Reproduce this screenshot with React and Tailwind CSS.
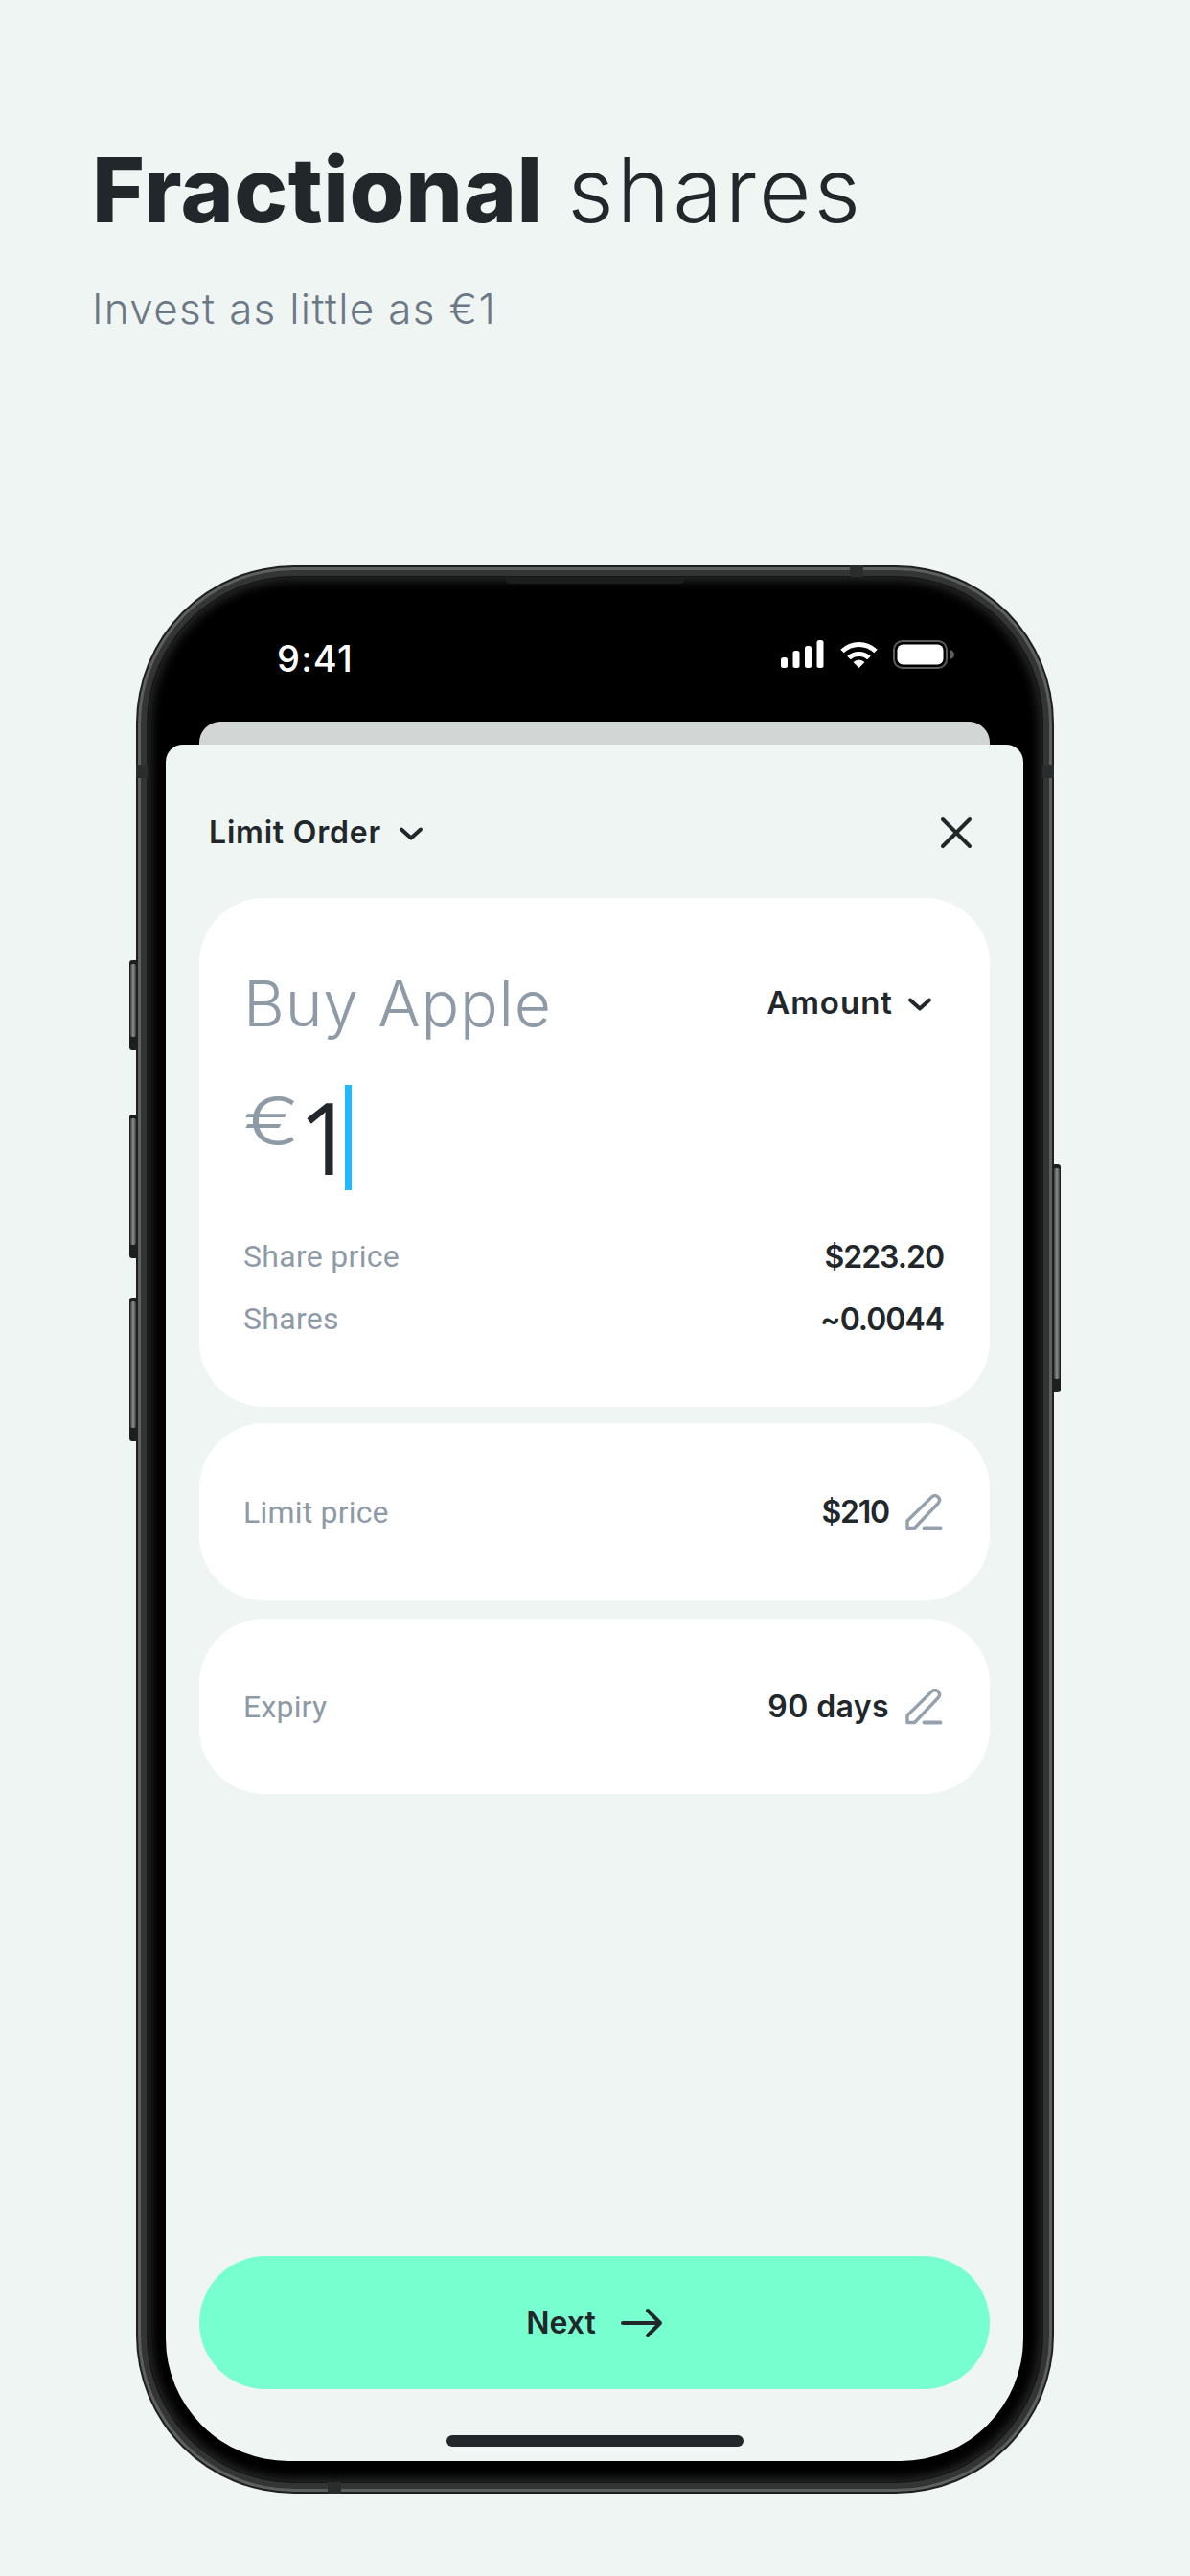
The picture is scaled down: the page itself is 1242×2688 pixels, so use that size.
import React from 'react';

const ink = 'text-[#21272a]';

function Chevron({ className }) {
  return (
    <svg viewBox="0 0 26 16" className={className} fill="none" stroke="#21272a" strokeWidth="4" strokeLinecap="round" strokeLinejoin="round">
      <path d="M3 3.5 L13 12.5 L23 3.5" />
    </svg>
  );
}

function Pencil() {
  return (
    <svg viewBox="0 0 39 38" className="h-[38px] w-[39px]" fill="none" stroke="#95a1ad" strokeLinecap="round" strokeLinejoin="round">
      <path strokeWidth="3.4" d="M2 35.5 V28 L27.5 3 C29.5 1.2 32 1.2 34 3 C36 5 36 7.5 34.2 9.5 L9.5 35.5 Z" />
      <path strokeWidth="3.8" d="M19.5 35.5 H36.5" />
    </svg>
  );
}

function StatusIcons() {
  return (
    <div className="flex items-start">
      <svg viewBox="0 0 45 29" className="h-[29px] w-[45px]" fill="#fff">
        <rect x="0" y="18" width="7" height="11" rx="2.5" />
        <rect x="12.5" y="11" width="7" height="18" rx="2.5" />
        <rect x="25" y="6" width="7" height="23" rx="2.5" />
        <rect x="37.5" y="0" width="7" height="29" rx="2.5" />
      </svg>
      <svg viewBox="0 0 39 29" className="ml-[17px] h-[29px] w-[39px]" fill="none" stroke="#fff" strokeWidth="5">
        <path d="M2 11.5 C12 2, 27 2, 37 11.5" />
        <path d="M9 18.5 C14.5 13, 24.5 13, 30 18.5" />
        <path d="M13.5 23 Q19.5 18 25.5 23 L19.5 29 Z" fill="#fff" stroke="none" />
      </svg>
      <svg viewBox="0 0 64 30" className="ml-[16px] h-[30px] w-[64px]">
        <rect x="1" y="1" width="55" height="28" rx="9" fill="none" stroke="#5c5c5c" strokeWidth="2" />
        <rect x="4.5" y="4.5" width="48" height="21" rx="6" fill="#fff" />
        <path d="M60 10 C63 11 64 13 64 15 C64 17 63 19 60 20 Z" fill="#5c5c5c" />
      </svg>
    </div>
  );
}

function InfoRow({ label, value }) {
  return (
    <div className="flex h-[40px] items-center justify-between">
      <span className="font-['Roboto'] text-[32px] tracking-[0.3px] text-[#8f9aa7]">{label}</span>
      <span className={`mt-[2px] text-[32px] font-semibold tracking-[-1px] ${ink}`}>{value}</span>
    </div>
  );
}

function EditCard({ label, value, className, valueClass }) {
  return (
    <div className={`flex items-center justify-between rounded-[68px] bg-white pl-[46px] pr-[49px] ${className}`}>
      <span className="font-['Roboto'] text-[32px] tracking-[0.2px] text-[#8f9aa7]">{label}</span>
      <div className="flex items-center gap-[17px]">
        <span className={`text-[32px] font-semibold ${valueClass} ${ink}`}>{value}</span>
        <Pencil />
      </div>
    </div>
  );
}

function SideButton({ className }) {
  return (
    <div className={`absolute w-[8px] bg-[#1d1e1e] ${className}`}>
      <div className="mx-[1px] mt-[4px] mb-[14px] h-[calc(100%-18px)] rounded-[2px] bg-gradient-to-r from-[#3c3d3d] via-[#8f908e] to-[#3c3d3d]" />
    </div>
  );
}

export default function App() {
  return (
    <div className="flex h-[2688px] w-[1242px] flex-col overflow-hidden bg-[#eff5f3] font-['Inter',sans-serif]">
      {/* Heading */}
      <div className="h-[590px] pl-[96px] pt-[146px]">
        <h1 className="text-[94px] leading-[104px] font-light tracking-[3px] text-[#21272a]">
          <span className="mr-[-4px] font-extrabold tracking-[0.6px]">Fractional</span> shares
        </h1>
        <p className="mt-[46px] text-[44px] leading-[52px] font-light tracking-[1.3px] text-[#6c7885]">Invest as little as €1</p>
      </div>

      {/* Phone */}
      <div className="relative ml-[142px] h-[2012px] w-[958px]">
        <SideButton className="left-[-7px] top-[412px] h-[94px] rounded-l-[3px]" />
        <SideButton className="left-[-7px] top-[573px] h-[150px] rounded-l-[3px]" />
        <SideButton className="left-[-7px] top-[764px] h-[150px] rounded-l-[3px]" />
        <SideButton className="right-[-7px] top-[625px] h-[238px] rounded-r-[3px]" />

        <div className="h-full rounded-[165px] bg-[#1e1f1f] p-[2px]">
          <div className="h-full rounded-[163px] bg-[#5e5f5f] p-[3px]">
            <div className="h-full rounded-[160px] bg-[#333434] p-[6px]">
              <div className="h-full rounded-[154px] bg-[#141515] p-[1px]">
                <div className="flex h-full flex-col rounded-[153px] bg-black pb-[22px] pl-[19px] pr-[20px] shadow-[inset_0_0_12px_3px_#2c2d2d]">
                  {/* Status bar */}
                  <div className="flex h-[151px] items-start justify-between pl-[116px] pr-[72px] pt-[66px]">
                    <span className="text-[38px] leading-[38px] font-medium tracking-[1.2px] text-white">9:41</span>
                    <StatusIcons />
                  </div>

                  <div className="mx-[35px] h-[24px] rounded-t-[22px] bg-[#d2d6d5]" />

                  {/* Sheet */}
                  <div className="flex flex-1 flex-col rounded-t-[18px] rounded-b-[128px] bg-[#eff5f3] px-[35px] pb-[15px]">
                    <div className="flex h-[160px] items-center justify-between pl-[10px] pr-[18px] pt-[23px]">
                      <div className="flex items-center gap-[18px]">
                        <span className={`text-[32px] font-semibold tracking-[0.8px] ${ink}`}>Limit Order</span>
                        <Chevron className="mt-[2px] h-[16px] w-[26px]" />
                      </div>
                      <svg viewBox="0 0 34 34" className="h-[34px] w-[34px]" fill="none" stroke="#21272a" strokeWidth="4" strokeLinecap="round">
                        <path d="M3 3 L31 31 M31 3 L3 31" />
                      </svg>
                    </div>

                    {/* Order card */}
                    <div className="h-[531px] rounded-[68px] bg-white pl-[46px] pr-[48px] pt-[62px]">
                      <div className="flex h-[96px] items-center justify-between">
                        <span className="text-[66px] font-light tracking-[0.8px] text-[#8f9aa7]">Buy Apple</span>
                        <div className="mr-[12px] flex items-center gap-[15px]">
                          <span className={`text-[33px] font-semibold tracking-[1px] ${ink}`}>Amount</span>
                          <Chevron className="mt-[2px] h-[16px] w-[26px]" />
                        </div>
                      </div>
                      <div className="mt-[37px] flex h-[110px] items-start">
                        <span className="mt-[-4px] inline-block w-[41px] origin-left scale-x-[1.25] text-[70px] leading-[84px] font-light text-[#8f9aa7]">€</span>
                        <span className={`ml-[16px] mt-[-7px] font-['Open_Sans'] text-[104px] leading-[122px] font-medium ${ink}`}>1</span>
                        <div className="ml-[-10px] h-[110px] w-[7px] bg-[#1fb9ff]" />
                      </div>
                      <div className="mt-[49px] flex flex-col gap-[25px]">
                        <InfoRow label="Share price" value="$223.20" />
                        <InfoRow label="Shares" value="~0.0044" />
                      </div>
                    </div>

                    <EditCard label="Limit price" value="$210" valueClass="tracking-[-1.2px]" className="mt-[17px] h-[185px]" />
                    <EditCard label="Expiry" value="90 days" valueClass="tracking-[0.4px]" className="mt-[19px] h-[183px]" />

                    <button className="mt-auto flex h-[139px] items-center justify-center gap-[26px] rounded-[70px] bg-[#78ffd0]">
                      <span className={`text-[32px] font-semibold ${ink}`}>Next</span>
                      <svg viewBox="0 0 44 32" className="h-[32px] w-[44px]" fill="none" stroke="#21272a" strokeWidth="4" strokeLinecap="round" strokeLinejoin="round">
                        <path d="M2 16 H41 M28 3 L41 16 L28 29" />
                      </svg>
                    </button>
                    <div className="mx-auto mt-[48px] h-[12px] w-[310px] rounded-full bg-[#21272a]" />
                  </div>
                </div>
              </div>
            </div>
          </div>
        </div>

        {/* Antenna bands and speaker */}
        <div className="absolute left-[745px] top-0 h-[12px] w-[14px] bg-[#2a2d2e]" />
        <div className="absolute left-[200px] bottom-0 h-[12px] w-[14px] bg-[#2a2d2e]" />
        <div className="absolute left-0 top-[208px] h-[14px] w-[12px] bg-[#2a2d2e]" />
        <div className="absolute right-0 top-[208px] h-[14px] w-[12px] bg-[#2a2d2e]" />
        <div className="absolute left-[385px] top-[13px] h-[6px] w-[188px] rounded-b-[6px] bg-[#1c1d1d]" />
      </div>
    </div>
  );
}
